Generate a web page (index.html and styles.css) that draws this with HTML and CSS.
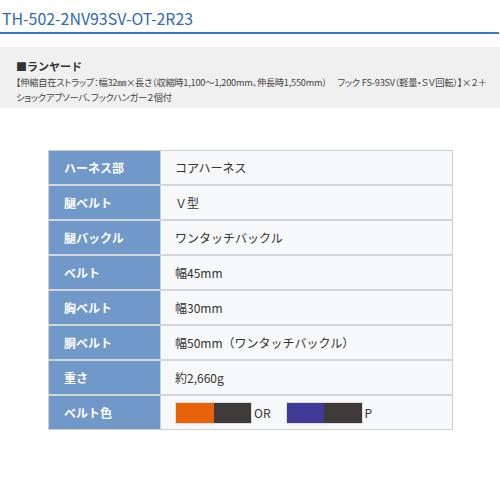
FILE: index.html
```html
<!DOCTYPE html>
<html lang="ja">
<head>
<meta charset="utf-8">
<link rel="stylesheet" href="styles.css">
</head>
<body>
<h1 class="title">TH-502-2NV93SV-OT-2R23</h1>
<div class="lanyard">
  <p class="lanyard-head">■ランヤード</p>
  <p class="lanyard-text">【伸縮自在ストラップ：幅32㎜×長さ（収縮時1,100〜1,200mm、伸長時1,550mm）　 フック FS-93SV（軽量・ＳＶ回転）】×２＋<br>ショックアブソーバ、フックハンガー２個付</p>
</div>
<table class="spec">
  <tr><th>ハーネス部</th><td>コアハーネス</td></tr>
  <tr><th>腿ベルト</th><td>Ｖ型</td></tr>
  <tr><th>腿バックル</th><td>ワンタッチバックル</td></tr>
  <tr><th>ベルト</th><td>幅45mm</td></tr>
  <tr><th>胸ベルト</th><td>幅30mm</td></tr>
  <tr><th>胴ベルト</th><td>幅50mm（ワンタッチバックル）</td></tr>
  <tr><th>重さ</th><td>約2,660g</td></tr>
  <tr><th>ベルト色</th><td>
    <div class="colors">
      <span class="swatch"><span class="half orange"></span><span class="half dark"></span></span><span class="clabel">OR</span>
      <span class="swatch"><span class="half purple"></span><span class="half dark"></span></span><span class="clabel">P</span>
    </div>
  </td></tr>
</table>
</body>
</html>
```
FILE: styles.css
```css
html, body {
  margin: 0;
  padding: 0;
  background: #fff;
  font-family: "Noto Sans CJK JP", "Noto Sans", sans-serif;
}
.title {
  margin: 0 1px 0 0;
  padding: 6px 0 0 2px;
  height: 26px;
  font-size: 15.9px;
  font-weight: 400;
  line-height: 26px;
  color: #2f69b8;
  border-bottom: 2px solid #3a78c8;
}
.lanyard {
  margin-top: 13px;
  background: #f0f0f0;
  box-sizing: border-box;
  height: 61px;
  padding: 11px 6px 0 16px;
}
.lanyard-head {
  margin: 0;
  font-size: 11px;
  font-weight: 700;
  line-height: 16px;
  color: #333;
}
.lanyard-text {
  margin: 1px 0 0 0;
  font-size: 9.2px;
  line-height: 15px;
  letter-spacing: -0.22px;
  color: #444;
  font-feature-settings: "palt";
  white-space: nowrap;
}
.spec {
  margin: 42px 0 0 48px;
  width: 405px;
  border-collapse: collapse;
  border: 1px solid #cfcfcf;
}
.spec th, .spec td {
  height: 33px;
  padding: 0;
  border-bottom: 2px solid #d6d6d6;
  font-size: 12px;
  text-align: left;
  vertical-align: middle;
}
.spec tr:last-child th, .spec tr:last-child td {
  border-bottom: 1px solid #cfcfcf;
}
.spec th {
  width: 96px;
  padding-left: 15px;
  background: #7099c9;
  color: #fff;
  font-weight: 700;
  border-right: 1px solid #cfcfcf;
}
.spec td {
  padding-left: 14px;
  background: #f7f8fa;
  color: #333;
}
.colors {
  display: flex;
  align-items: center;
}
.swatch {
  display: flex;
  width: 77px;
  height: 22px;
  border: 1px solid #ddd;
  box-sizing: border-box;
}
.half {
  flex: 1;
}
.orange { background: #e8620a; }
.purple { background: #3f3a95; }
.dark { background: #3e3a39; }
.clabel {
  margin-left: 2px;
  margin-right: 15px;
  font-size: 12px;
  color: #333;
}
```
